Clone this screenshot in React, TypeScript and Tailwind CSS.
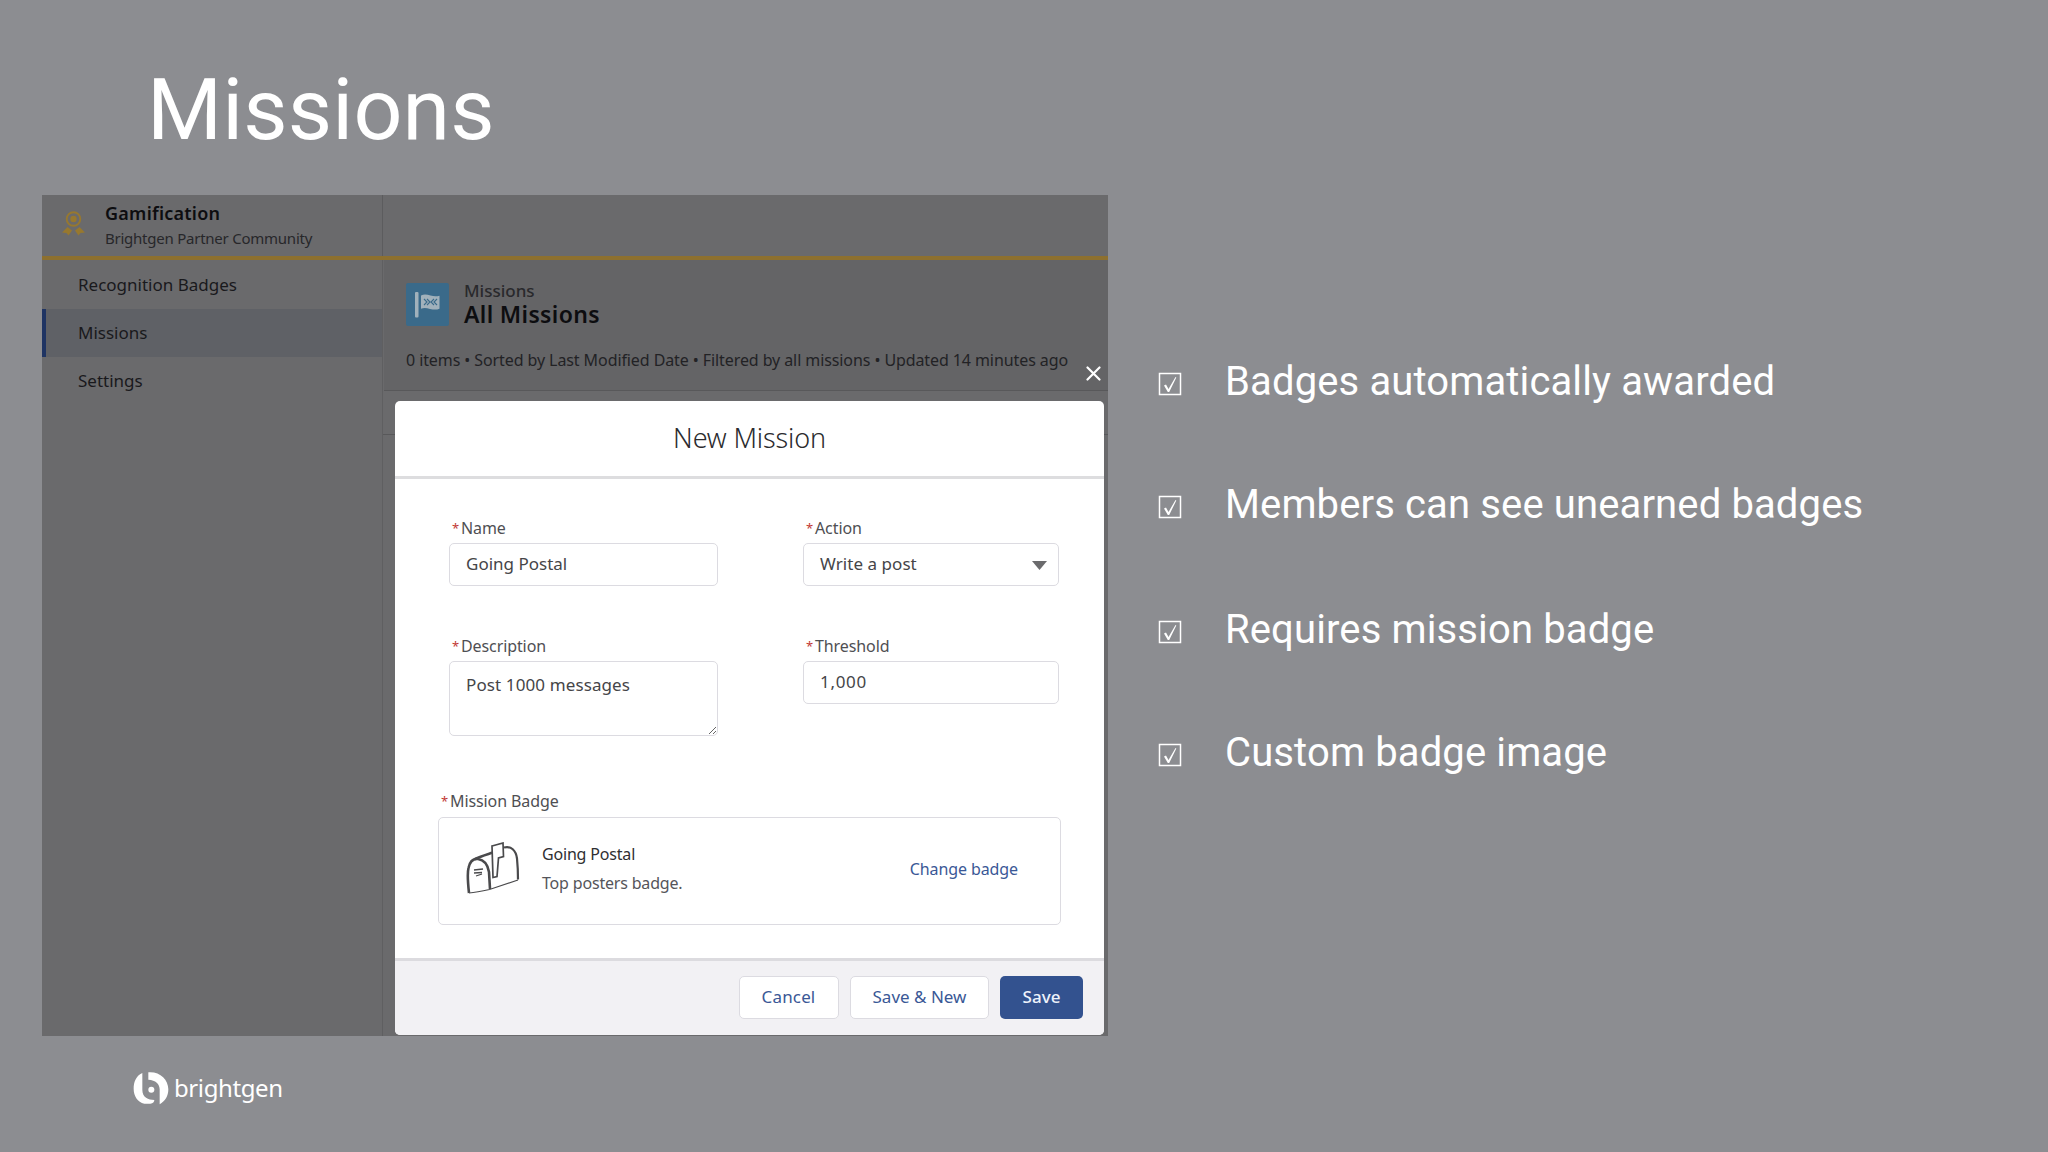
import { useState } from "react";

const navItems = ["Recognition Badges", "Missions", "Settings"];

const bulletGroups = [
  ["Badges automatically awarded", "Members can see unearned badges"],
  ["Requires mission badge", "Custom badge image"],
];

/* ---------------- ICONS ---------------- */
function MedalIcon() {
  return (
    <svg width="24" height="26" viewBox="0 0 24 26" fill="none">
      <circle cx="11.500" cy="8" r="6.800" stroke="#97782f" strokeWidth="1.900" />
      <circle cx="11.500" cy="8" r="3.200" fill="#97782f" />
      <path d="M5.500 16l4.500 3.500-3.500 5-2-2.500-4.500-.5z" fill="#97782f" />
      <path d="M17.500 16l-4.500 3.500 3.500 5 2-2.500 4.500-.5z" fill="#97782f" />
    </svg>
  );
}

function FlagIcon() {
  return (
    <svg width="43" height="43" viewBox="0 0 43 43">
      <rect width="43" height="43" rx="2" fill="#3a6a8a" />
      <rect x="9" y="9" width="3.500" height="25.500" rx="1" fill="#a1b1bb" />
      <path
        d="M15 12.500c3-1.500 6-1 9.500 0s6 1 9 .2v13c-3 1.300-6 1-9.500.2s-6-1.200-9-.2z"
        fill="#a1b1bb"
      />
      <path
        d="M18 16l3 3-3 3M21 16l3 3-3 3M31 16l-3 3 3 3M28 16l-3 3 3 3"
        stroke="#3a6a8a"
        strokeWidth="1.100"
        fill="none"
      />
    </svg>
  );
}

function MailboxIcon() {
  return (
    <svg width="54" height="54" viewBox="0 0 54 54" fill="none" stroke="#4a4a4c">
      <path
        d="M3 51C2 42 1 32 2.500 26 4 19 8 16.500 12 17c7 1 10 7 11 13l1 17"
        strokeWidth="2.600"
      />
      <path d="M3 51c7-.5 14-2 20.500-3.500L52 38" strokeWidth="1.200" />
      <path d="M9 17c6-3 12-4.500 18-6.500" strokeWidth="2.600" />
      <path d="M38 5.500c7-2 12 3 13 11 .7 7 1 14 1 21" strokeWidth="2.200" />
      <path
        d="M26 4l11-3 .5 13.500-5 1.500-1.500 18.500-4 1z"
        fill="#fff"
        strokeWidth="1.700"
      />
      <path d="M8 28l9-1M8 31l8-.5M10 34l6-2" strokeWidth="1.300" />
    </svg>
  );
}

function BrightgenMark() {
  return (
    <svg width="36" height="34" viewBox="0 0 108 100" fill="#fff">
      <path d="M28 5C8 14 2 34 2 52c0 22 12 40 32 45h18c8-1 12-5 12-11C46 86 28 78 28 56z" />
      <path d="M46 3c34-3 60 21 60 51 0 20-10 36-26 45V54c0-16-12-28-34-29z" />
      <circle cx="55" cy="55" r="9" />
    </svg>
  );
}

function CheckIcon() {
  return (
    <svg width="24" height="24" viewBox="0 0 24 24" fill="none">
      <rect x="1.500" y="1.500" width="21" height="21" stroke="#fff" strokeWidth="1.500" />
      <path d="M6 13.500l2-1 2.500 4.500L17.500 5l.8.4L11.200 20H9.800z" fill="#fff" />
    </svg>
  );
}

/* ---------------- FORM PARTS ---------------- */
function Label({ text }: { text: string }) {
  return (
    <label className="flex h-5 pl-[3px] text-[16px] leading-5 tracking-[-0.1px] text-[#4f4f53]">
      <span className="w-[9px] text-[13px] text-[#c23934]">*</span>
      {text}
    </label>
  );
}

const inputClass =
  "w-full rounded-[5px] border-[1.5px] border-[#dcdbe1] bg-white pl-4 text-[17px] text-[#454548] outline-none";

export default function App() {
  const [active, setActive] = useState("Missions");
  const [form, setForm] = useState({
    name: "Going Postal",
    description: "Post 1000 messages",
    threshold: "1,000",
  });

  return (
    <div className="flex h-[1152px] w-[2048px] flex-col overflow-hidden bg-[#8c8d91] font-['Noto_Sans','Open_Sans',sans-serif]">
      {/* TITLE */}
      <h1 className="h-[195px] pl-[147px] pt-[60px] font-[Roboto,sans-serif] text-[86px] leading-[100px] tracking-[0.15px] text-white">
        Missions
      </h1>

      <div className="flex h-[841px] pl-[42px]">
        {/* SCREENSHOT */}
        <div className="relative flex w-[1066px] flex-col bg-[#6a6a6c]">
          <div className="flex h-[61px]">
            <div className="flex w-[341px] border-r border-[#5c5c5e] pl-5">
              <div className="w-[43px] pt-4">
                <MedalIcon />
              </div>
              <div className="pt-[6px]">
                <div className="text-[18px] font-semibold leading-6 tracking-[0.25px] text-[#0d0d10]">
                  Gamification
                </div>
                <div className="pt-[3px] text-[15px] leading-5 tracking-[-0.24px] text-[#27272a]">
                  Brightgen Partner Community
                </div>
              </div>
            </div>
          </div>
          <div className="h-1 bg-[#8d702f]" />

          <div className="flex flex-1">
            <nav className="w-[341px] border-r border-[#5f5f61] pt-px">
              {navItems.map((item) => (
                <button
                  key={item}
                  onClick={() => setActive(item)}
                  className={`block h-12 w-full text-left text-[17px] text-[#19191c] ${
                    active === item
                      ? "border-l-[4px] border-[#1f3463] bg-[#5f6166] pl-8"
                      : "pl-9"
                  }`}
                >
                  {item}
                </button>
              ))}
            </nav>

            <div className="flex-1">
              <div className="ml-px h-[131px] border-b border-[#58585a] bg-[#646466] pl-[22px] pt-[23px]">
                <div className="flex">
                  <FlagIcon />
                  <div className="-mt-0.5 pl-[15px]">
                    <div className="text-[17px] font-medium leading-5 text-[#29292c]">
                      Missions
                    </div>
                    <div className="-mt-px text-[23px] font-semibold leading-7 tracking-[0.35px] text-[#0d0d10]">
                      All Missions
                    </div>
                  </div>
                </div>
                <div className="pt-5 text-[16px] leading-6 tracking-[-0.09px] text-[#222225]">
                  0 items • Sorted by Last Modified Date • Filtered by all
                  missions • Updated 14 minutes ago
                </div>
              </div>
              <div className="h-11 border-b border-[#58585a]" />
            </div>
          </div>

          {/* CLOSE */}
          <button className="absolute left-[1044px] top-[171px] text-white">
            <svg width="15" height="15" viewBox="0 0 15 15" stroke="currentColor" strokeWidth="2.2" strokeLinecap="round">
              <path d="M1.500 1.500l12 12M13.500 1.500l-12 12" />
            </svg>
          </button>

          {/* MODAL */}
          <div className="absolute left-[353px] top-[206px] flex h-[634px] w-[709px] flex-col overflow-hidden rounded-[5px] bg-white">
            <h2 className="h-[78px] border-b-[3px] border-[#dddddf] pt-[18px] text-center text-[27px] font-light leading-[38px] tracking-[-0.15px] text-[#2b2b2e]">
              New Mission
            </h2>

            <div className="flex-1 pt-[39px]">
              <div className="flex gap-[85px] pl-[54px]">
                <div className="w-[269px]">
                  <Label text="Name" />
                  <input
                    value={form.name}
                    onChange={(e) =>
                      setForm((f) => ({ ...f, name: e.target.value }))
                    }
                    className={`mt-[5px] block h-[43px] pb-[2px] ${inputClass}`}
                  />
                </div>
                <div className="w-[256px]">
                  <Label text="Action" />
                  <button
                    className={`mt-[5px] flex h-[43px] items-center justify-between pr-[11px] text-left ${inputClass}`}
                  >
                    <span className="pb-px tracking-[0.05px]">Write a post</span>
                    <svg width="15" height="9" viewBox="0 0 15 9" fill="#6b6b6d" className="mt-0.5">
                      <path d="M0 0h15L7.500 9z" />
                    </svg>
                  </button>
                </div>
              </div>

              <div className="flex gap-[85px] pl-[54px] pt-[50px]">
                <div className="w-[269px]">
                  <Label text="Description" />
                  <textarea
                    value={form.description}
                    onChange={(e) =>
                      setForm((f) => ({ ...f, description: e.target.value }))
                    }
                    className={`mt-[5px] block h-[75px] pt-[11px] leading-6 tracking-[0.11px] ${inputClass}`}
                  />
                </div>
                <div className="w-[256px]">
                  <Label text="Threshold" />
                  <input
                    value={form.threshold}
                    onChange={(e) =>
                      setForm((f) => ({ ...f, threshold: e.target.value }))
                    }
                    className={`mt-[5px] block h-[43px] pb-[2px] tracking-[0.7px] ${inputClass}`}
                  />
                </div>
              </div>

              <div className="pl-[43px] pt-[55px]">
                <Label text="Mission Badge" />
                <div className="mt-[6px] flex h-[108px] w-[623px] items-center rounded-[5px] border-[1.5px] border-[#dcdbe1] pb-[5px] pl-[27px] pr-[42px]">
                  <MailboxIcon />
                  <div className="flex-1 pl-[22px] text-[16px] tracking-[-0.18px]">
                    <div className="leading-[30px] text-[#2f2f32]">
                      Going Postal
                    </div>
                    <div className="leading-[29px] text-[#55555a]">
                      Top posters badge.
                    </div>
                  </div>
                  <a className="text-[16px] tracking-[-0.1px] text-[#3a5896]">
                    Change badge
                  </a>
                </div>
              </div>
            </div>

            <div className="flex h-[77px] justify-end gap-[11px] border-t-[3px] border-[#dcdbdf] bg-[#f2f1f4] pr-[21px] pt-[15px] text-[17px] text-[#3a5896]">
              <button className="h-[43px] w-[100px] rounded-[5px] border-[1.5px] border-[#dcdbe1] bg-white pb-px pr-px tracking-[0.15px]">
                Cancel
              </button>
              <button className="h-[43px] w-[139px] rounded-[5px] border-[1.5px] border-[#dcdbe1] bg-white pb-px">
                Save &amp; New
              </button>
              <button className="h-[43px] w-[83px] rounded-[5px] bg-[#33528f] pb-px font-medium text-[#eef2fb]">
                Save
              </button>
            </div>
          </div>
        </div>

        {/* BULLETS */}
        <div className="flex flex-col gap-[77px] pl-[50px] pt-[163px] font-[Roboto,sans-serif] text-[40px] leading-[48px] tracking-[0.13px] text-white">
          {bulletGroups.map((group, i) => (
            <ul key={i} className="flex flex-col gap-[75px]">
              {group.map((b) => (
                <li key={b} className="flex">
                  <span className="w-[67px] pt-[14px]">
                    <CheckIcon />
                  </span>
                  {b}
                </li>
              ))}
            </ul>
          ))}
        </div>
      </div>

      {/* LOGO */}
      <footer className="flex pl-[133px] pt-[35px] text-white">
        <BrightgenMark />
        <span className="pl-[5px] text-[24px] leading-[34px] tracking-[-0.4px]">
          brightgen
        </span>
      </footer>
    </div>
  );
}
